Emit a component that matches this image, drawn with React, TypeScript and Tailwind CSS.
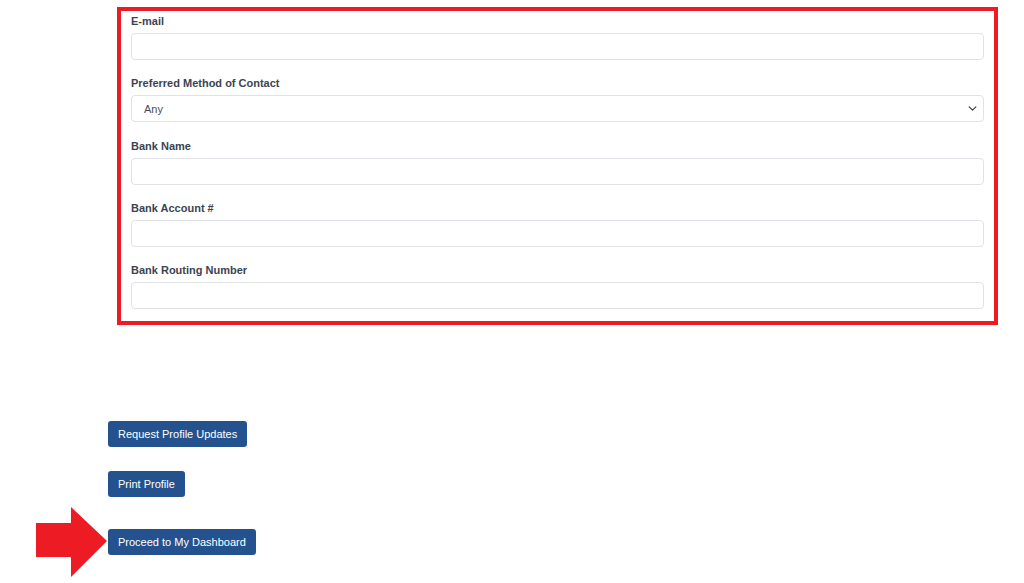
import React from "react";

const fields = [
  { label: "E-mail", type: "input" },
  { label: "Preferred Method of Contact", type: "select" },
  { label: "Bank Name", type: "input" },
  { label: "Bank Account #", type: "input" },
  { label: "Bank Routing Number", type: "input" },
];

export default function App() {
  return (
    <div
      className="relative w-[1024px] h-[583px] bg-white overflow-hidden"
      style={{ fontFamily: '"Liberation Sans", Arial, sans-serif' }}
    >
      <div className="ml-[117px] mt-[7px] w-[881px] border-[4px] border-[#ed1c24] px-[10px] pt-[2px] pb-[12px]">
        {fields.map((f, i) => (
          <div key={f.label} className={i < fields.length - 1 ? "mb-[15.25px]" : ""}>
            <div className="text-[11px] leading-[16px] font-bold text-[#3b4452] mb-[4px]">{f.label}</div>
            {f.type === "input" ? (
              <div className="h-[27px] border border-[#dfe2e6] rounded-[4px] bg-white" />
            ) : (
              <div className="h-[27px] border border-[#dfe2e6] rounded-[4px] bg-white flex items-center justify-between pl-[12px] pr-[6px]">
                <span className="text-[11px] text-[#495057]">Any</span>
                <svg width="9" height="9" viewBox="0 0 16 16" fill="none">
                  <path d="M2 5l6 6 6-6" stroke="#343a40" strokeWidth="2" strokeLinecap="round" strokeLinejoin="round" />
                </svg>
              </div>
            )}
          </div>
        ))}
      </div>

      <div className="ml-[108px] mt-[96px] flex flex-col items-start">
        <button className="h-[26px] px-[10px] rounded-[3px] bg-[#23528f] text-white text-[11px] leading-none">
          Request Profile Updates
        </button>
        <button className="mt-[24px] h-[26px] px-[10px] rounded-[3px] bg-[#23528f] text-white text-[11px] leading-none">
          Print Profile
        </button>
        <button className="mt-[32px] h-[26px] px-[10px] rounded-[3px] bg-[#23528f] text-white text-[11px] leading-none">
          Proceed to My Dashboard
        </button>
      </div>

      <svg className="absolute left-[36px] top-[507px]" width="72" height="70" viewBox="0 0 72 70">
        <polygon points="0,16 35,16 35,0 71,34 35,70 35,50 0,50" fill="#ed1c24" />
      </svg>
    </div>
  );
}
